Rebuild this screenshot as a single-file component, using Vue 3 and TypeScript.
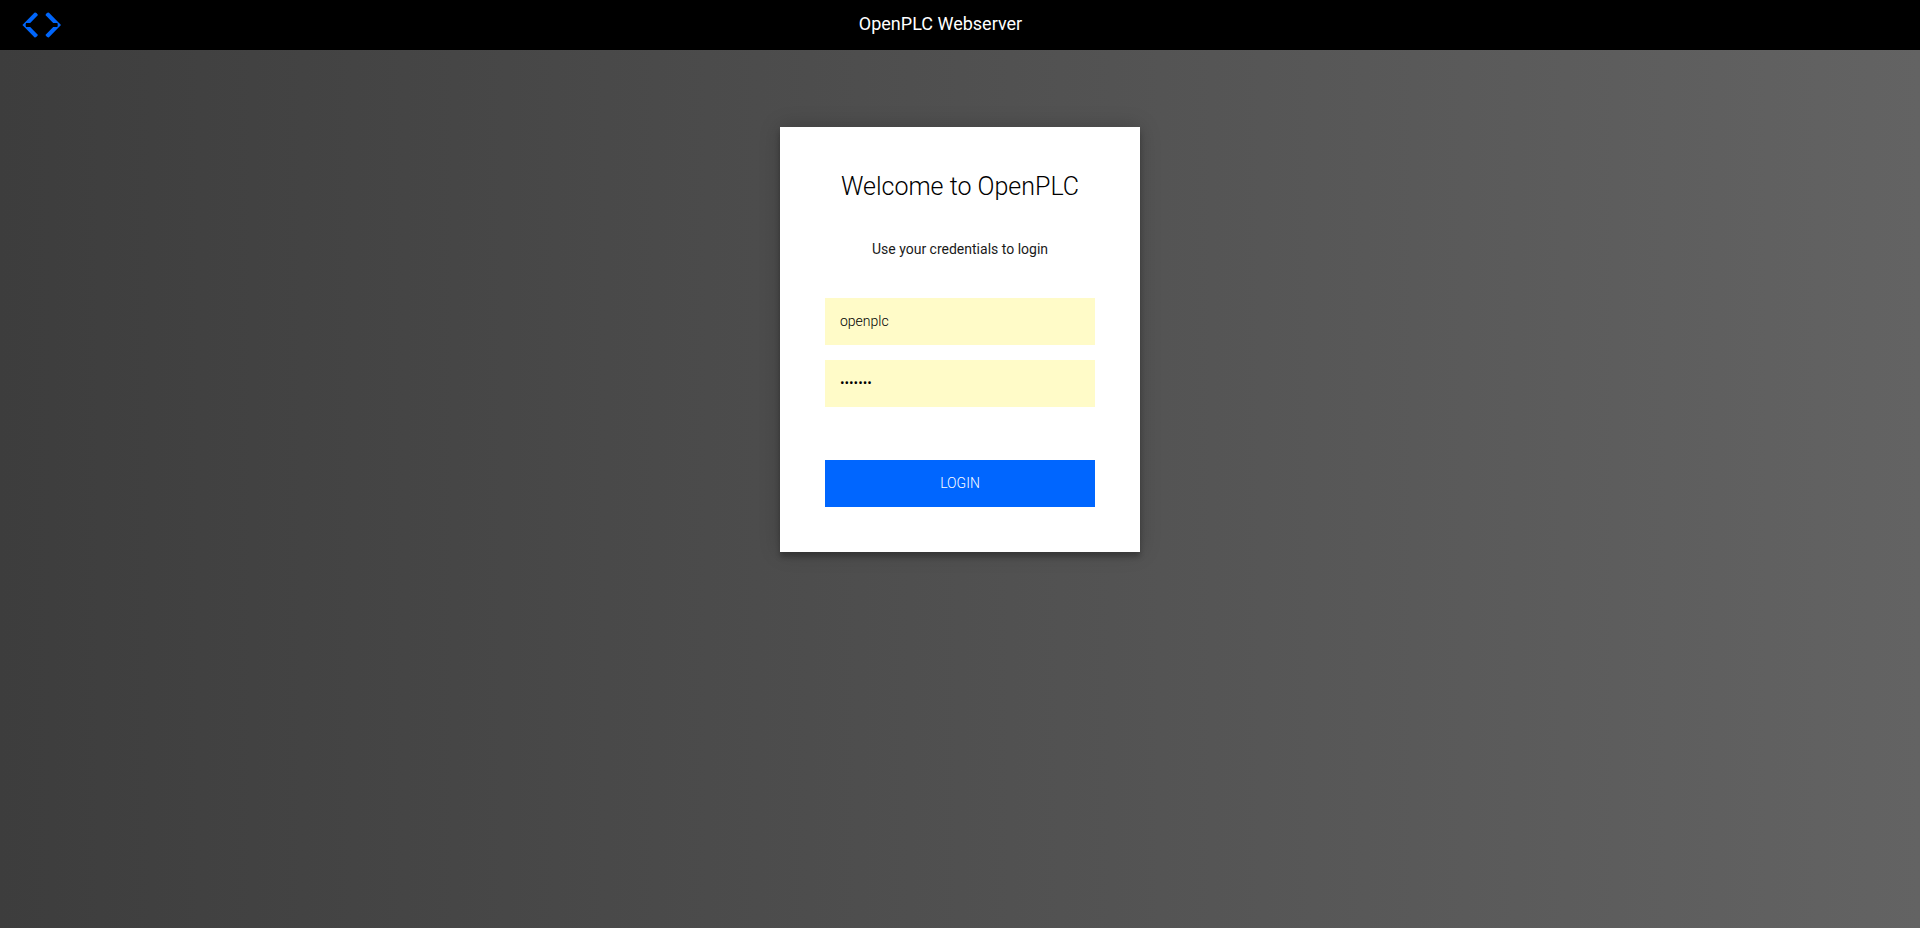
<script setup lang="ts">
import { ref } from 'vue'

const username = ref('openplc')
const password = ref('openplc')
</script>

<template>
  <div class="page">
    <header class="top">
      <svg class="logo" viewBox="0 0 40 30" aria-hidden="true">
        <path d="M2.400 15 14.400 2.800Q16 1.800 18 5L10.200 13H6L5.600 15 6 17H10.200L18 25Q16 28.200 14.400 27.200Z" />
        <path d="M41 15 29 2.800Q27.400 1.800 25.400 5L33.200 13H37.400L37.800 15 37.400 17H33.200L25.400 25Q27.400 28.200 29 27.200Z" />
      </svg>
      <h1 class="title">OpenPLC Webserver</h1>
    </header>
    <main class="content">
      <form class="card" @submit.prevent>
        <h2 class="welcome">Welcome to OpenPLC</h2>
        <p class="hint">Use your credentials to login</p>
        <input v-model="username" class="field" type="text" aria-label="Username" />
        <input v-model="password" class="field" type="password" aria-label="Password" />
        <button class="login" type="submit">LOGIN</button>
      </form>
    </main>
  </div>
</template>

<style>
body {
  margin: 0;
}
</style>

<style scoped>
.page {
  display: flex;
  flex-direction: column;
  min-height: 100vh;
  background: linear-gradient(to right, #3d3d3d, #636363);
  font-family: Roboto, sans-serif;
  color: #1a1a1a;
}
.top {
  display: flex;
  height: 50px;
  padding: 0 99px 0 20px;
  background: #000;
}
.logo {
  width: 40px;
  height: 30px;
  margin-top: 10px;
  overflow: visible;
  fill: #0066fc;
}
.title {
  flex: 1;
  margin: 0;
  color: #fff;
  font-size: 18px;
  line-height: 48px;
  font-weight: 400;
  text-align: center;
}
.content {
  padding: 77px 20px 40px;
}
.card {
  box-sizing: border-box;
  max-width: 360px;
  margin: 0 auto;
  padding: 45px;
  background: #fff;
  box-shadow: 0 0 20px rgba(0, 0, 0, 0.2), 0 5px 5px rgba(0, 0, 0, 0.24);
  text-align: center;
}
.welcome {
  margin: 0 0 38px;
  color: #000;
  font-size: 25px;
  line-height: 30px;
  font-weight: 300;
}
.hint {
  margin: 0 0 40px;
  font-size: 14px;
  line-height: 18px;
}
.field,
.login {
  display: block;
  box-sizing: border-box;
  width: 100%;
  height: 47px;
  padding: 15px;
  border: 0;
  border-radius: 0;
  font-family: inherit;
  font-size: 14px;
  line-height: 17px;
  font-weight: 300;
}
.field {
  margin-bottom: 15px;
  padding: 14px 15px 16px;
  background: #fffbc8;
  color: #000;
}
.login {
  margin-top: 53px;
  background: #0066ff;
  color: #fff;
}
</style>
